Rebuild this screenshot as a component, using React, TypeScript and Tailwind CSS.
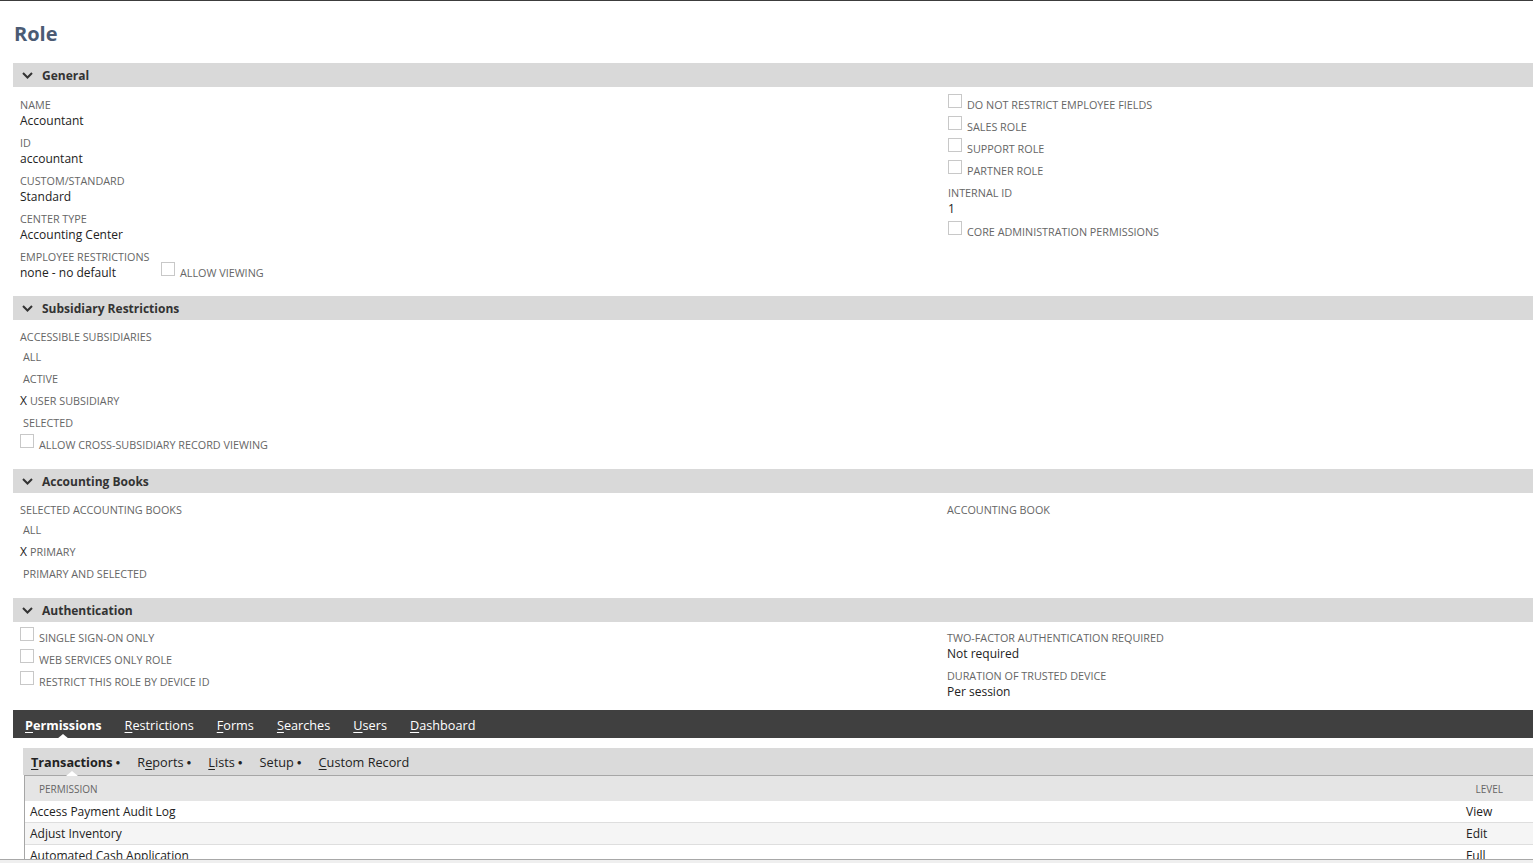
type Field = { label: string; value: string };

function SectionHeader({ title }: { title: string }) {
    return (
        <div className="flex items-center h-[24px] bg-[#d9d9d9] pl-[9px] pt-px">
            <svg width="11" height="7" viewBox="0 0 11 7" className="text-[#333]">
                <polyline points="1,1 5.5,5.5 10,1" fill="none" stroke="currentColor" strokeWidth="2" />
            </svg>
            <span className="ml-[9px] text-[12px] font-bold text-[#333]">{title}</span>
        </div>
    );
}

function FieldBlock({ label, value, children }: { label: string; value: string; children?: React.ReactNode }) {
    return (
        <div className="mb-[7px]">
            <div className="text-[10.8px] leading-[14px] uppercase text-[#666]">{label}</div>
            <div className="flex items-start h-[17px] pt-px">
                <div className="text-[12px] leading-[16px] text-[#222]">{value}</div>
                {children}
            </div>
        </div>
    );
}

function Check({ label, className = "" }: { label: string; className?: string }) {
    return (
        <div className={`flex items-start h-[22px] ${className}`}>
            <span className="w-[14px] h-[14px] border border-[#c8c8c8] bg-white shrink-0" />
            <span className="ml-[5px] text-[10.8px] leading-[22px] uppercase text-[#666] whitespace-nowrap">{label}</span>
        </div>
    );
}

function Option({ label, checked }: { label: string; checked?: boolean }) {
    return (
        <div className="flex items-center h-[22px]">
            {checked ? (
                <span className="text-[12px] text-[#222] w-[10px]">X</span>
            ) : (
                <span className="w-[3px]" />
            )}
            <span className="text-[10.8px] uppercase text-[#666]">{label}</span>
        </div>
    );
}

const generalFields: Field[] = [
    { label: "Name", value: "Accountant" },
    { label: "ID", value: "accountant" },
    { label: "Custom/Standard", value: "Standard" },
    { label: "Center Type", value: "Accounting Center" },
];

const tabs = ["Permissions", "Restrictions", "Forms", "Searches", "Users", "Dashboard"];

const subtabs = [
    { name: "Transactions", u: 0, dot: true },
    { name: "Reports", u: 1, dot: true },
    { name: "Lists", u: 0, dot: true },
    { name: "Setup", u: -1, dot: true },
    { name: "Custom Record", u: 0, dot: false },
];

const rows = [
    { name: "Access Payment Audit Log", level: "View" },
    { name: "Adjust Inventory", level: "Edit" },
    { name: "Automated Cash Application", level: "Full" },
];

function Underlined({ text, index }: { text: string; index: number }) {
    if (index < 0) return <>{text}</>;
    return (
        <>
            {text.slice(0, index)}
            <span className="underline underline-offset-2">{text[index]}</span>
            {text.slice(index + 1)}
        </>
    );
}

export default function App() {
    return (
        <div className="h-[863px] flex flex-col overflow-hidden bg-white font-['Open_Sans',sans-serif]">
            <div className="h-px bg-[#3c3c3c] shrink-0" />
            <div className="flex-1 overflow-hidden pl-[13px]">
                {/* Title */}
                <h1 className="text-[20px] font-bold text-[#4b5b74] h-[62px] pl-px pt-[18px] leading-[30px]">Role</h1>

                {/* General */}
                <SectionHeader title="General" />
                <div className="grid grid-cols-[927px_1fr] pl-[7px] pb-[8px]">
                    <div className="pt-[11px]">
                        {generalFields.map((f) => (
                            <FieldBlock key={f.label} label={f.label} value={f.value} />
                        ))}
                        <FieldBlock label="Employee Restrictions" value="none - no default">
                            <div className="ml-[45px] -mt-[3px]">
                                <Check label="Allow Viewing" />
                            </div>
                        </FieldBlock>
                    </div>
                    <div className="pt-[7px] pl-px">
                        <Check label="Do Not Restrict Employee Fields" />
                        <Check label="Sales Role" />
                        <Check label="Support Role" />
                        <Check label="Partner Role" />
                        <div className="mt-[4px]">
                            <FieldBlock label="Internal ID" value="1" />
                        </div>
                        <div className="-mt-[3px]">
                            <Check label="Core Administration Permissions" />
                        </div>
                    </div>
                </div>

                {/* Subsidiary Restrictions */}
                <SectionHeader title="Subsidiary Restrictions" />
                <div className="pl-[7px] pt-[10px] pb-[13px]">
                    <div className="text-[10.8px] leading-[14px] uppercase text-[#666]">Accessible Subsidiaries</div>
                    <div className="mt-[2px]">
                        <Option label="All" />
                        <Option label="Active" />
                        <Option label="User Subsidiary" checked />
                        <Option label="Selected" />
                        <Check label="Allow Cross-Subsidiary Record Viewing" />
                    </div>
                </div>

                {/* Accounting Books */}
                <SectionHeader title="Accounting Books" />
                <div className="grid grid-cols-[927px_1fr] pl-[7px] pt-[10px] pb-[13px]">
                    <div>
                        <div className="text-[10.8px] leading-[14px] uppercase text-[#666]">Selected Accounting Books</div>
                        <div className="mt-[2px]">
                            <Option label="All" />
                            <Option label="Primary" checked />
                            <Option label="Primary and Selected" />
                        </div>
                    </div>
                    <div>
                        <div className="text-[10.8px] leading-[14px] uppercase text-[#666]">Accounting Book</div>
                    </div>
                </div>

                {/* Authentication */}
                <SectionHeader title="Authentication" />
                <div className="grid grid-cols-[927px_1fr] pl-[7px] pb-[3px]">
                    <div className="pt-[5px]">
                        <Check label="Single Sign-On Only" />
                        <Check label="Web Services Only Role" />
                        <Check label="Restrict This Role By Device ID" />
                    </div>
                    <div className="pt-[9px]">
                        <FieldBlock label="Two-Factor Authentication Required" value="Not required" />
                        <FieldBlock label="Duration of Trusted Device" value="Per session" />
                    </div>
                </div>

                {/* Tabs */}
                <div className="relative flex items-center h-[28px] bg-[#404040] pl-[12px] pt-[3px] gap-[23px]">
                    {tabs.map((t, i) => (
                        <span
                            key={t}
                            className={`relative text-[12.7px] text-white ${i === 0 ? "font-bold" : ""}`}
                        >
                            <Underlined text={t} index={0} />
                            {i === 0 && (
                                <span className="absolute left-1/2 -translate-x-1/2 top-[18px] w-0 h-0 border-l-[6px] border-r-[6px] border-b-[5px] border-l-transparent border-r-transparent border-b-white" />
                            )}
                        </span>
                    ))}
                </div>

                {/* Subtabs + table */}
                <div className="ml-[10px] mt-[10px]">
                    <div className="flex items-center h-[27px] bg-[#dadada] pl-[8px] pt-[2px] gap-[17px]">
                        {subtabs.map((s, i) => (
                            <span key={s.name} className="relative text-[12.7px] text-[#222] flex items-center">
                                <span className={i === 0 ? "font-bold" : ""}>
                                    <Underlined text={s.name} index={s.u} />
                                </span>
                                {s.dot && <span className="ml-[3px] text-[8px]">●</span>}
                                {i === 0 && (
                                    <span className="absolute left-[35px] top-[18px] w-0 h-0 border-l-[6px] border-r-[6px] border-b-[5px] border-l-transparent border-r-transparent border-b-white" />
                                )}
                            </span>
                        ))}
                    </div>
                    <div className="ml-px border-l border-t border-[#a6a6a6]">
                        <div className="flex items-center justify-between h-[25px] pt-[2px] bg-[#e5e5e5] pl-[14px] pr-[30px] text-[10px] uppercase text-[#666]">
                            <span>Permission</span>
                            <span>Level</span>
                        </div>
                        {rows.map((r, i) => (
                            <div
                                key={r.name}
                                className={`flex items-center justify-between h-[22px] pt-px pl-[5px] pr-[41px] border-b border-[#dedede] text-[12px] text-[#222] ${i % 2 === 1 ? "bg-[#f5f5f5]" : "bg-white"}`}
                            >
                                <span>{r.name}</span>
                                <span className="w-[26px]">{r.level}</span>
                            </div>
                        ))}
                    </div>
                </div>
            </div>
            <div className="h-[4px] shrink-0 border-t border-[#a8a8a8] bg-[#efefef]" />
        </div>
    );
}
